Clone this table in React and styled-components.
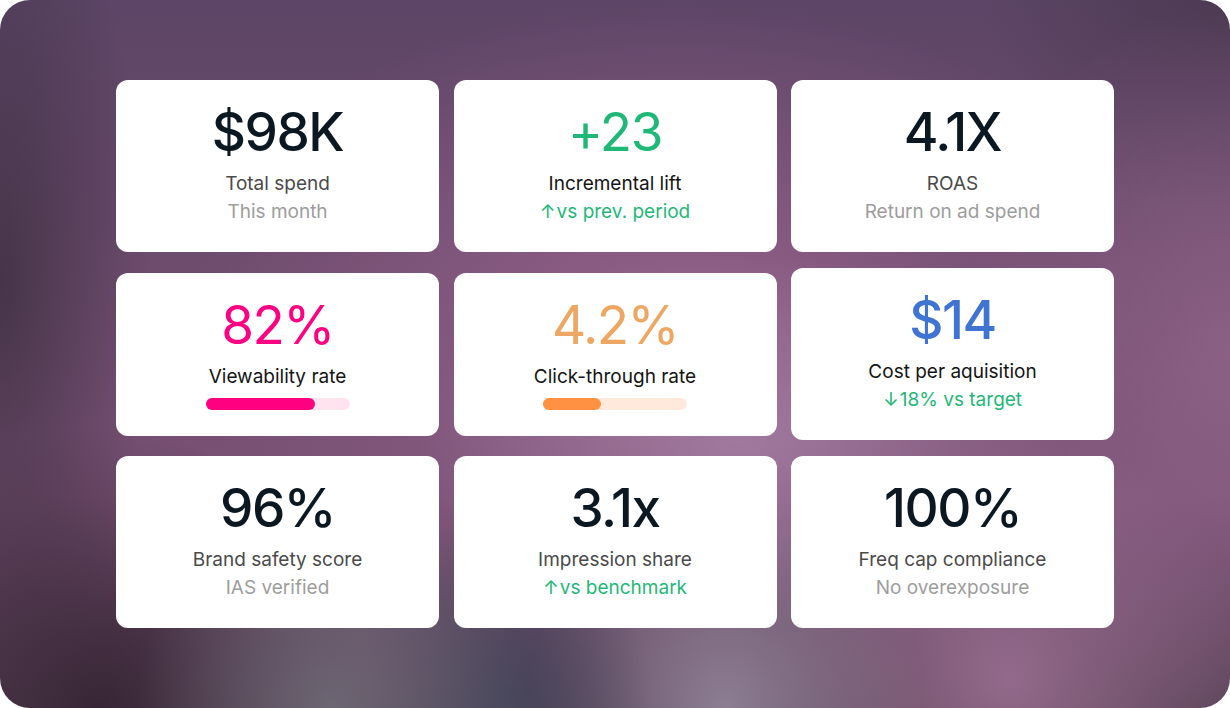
import React from 'react';
import styled, { createGlobalStyle } from 'styled-components';

const GlobalStyle = createGlobalStyle`
  html, body {
    margin:0;
    padding:0;
    background:#ffffff;
  }
  body {
    font-family:Inter, "Noto Sans", "Liberation Sans", sans-serif;
    -webkit-font-smoothing:antialiased;
  }
`

const Frame = styled.div`
  width:1230px;
  height:708px;
  box-sizing:border-box;
  border-radius:30px;
  overflow:hidden;
  padding-top:80px;
  display:flex;
  justify-content:center;
  align-items:flex-start;
  background:
    radial-gradient(ellipse 16% 30% at 27% 100%, rgba(112,108,120,0.85), rgba(112,108,120,0) 100%),
    radial-gradient(ellipse 12% 28% at 41% 100%, rgba(66,68,90,0.9), rgba(66,68,90,0) 100%),
    radial-gradient(ellipse 16% 32% at 59% 100%, rgba(150,136,158,0.85), rgba(150,136,158,0) 100%),
    radial-gradient(ellipse 20% 36% at 82% 96%, rgba(160,114,150,0.8), rgba(160,114,150,0) 100%),
    radial-gradient(ellipse 22% 40% at 8% 100%, rgba(54,36,52,0.95), rgba(54,36,52,0) 100%),
    radial-gradient(ellipse 26% 26% at 60% 62%, rgba(172,134,170,0.7), rgba(172,134,170,0) 100%),
    radial-gradient(ellipse 40% 45% at 55% 45%, rgba(150,98,140,0.9), rgba(150,98,140,0) 100%),
    radial-gradient(ellipse 22% 50% at 100% 50%, rgba(156,108,146,0.6), rgba(156,108,146,0) 100%),
    radial-gradient(ellipse 12% 60% at 0% 40%, rgba(56,44,60,0.75), rgba(56,44,60,0) 100%),
    radial-gradient(ellipse 20% 30% at 100% 0%, rgba(72,54,76,0.8), rgba(72,54,76,0) 100%),
    linear-gradient(180deg, #5c4566 0%, #6e4c6e 40%, #7a5276 70%, #5a4458 100%);
`

const Grid = styled.div`
  display:grid;
  grid-template-columns:repeat(3, 323px);
  column-gap:14.5px;
  row-gap:16px;
  align-items:center;
`

const Card = styled.div`
  background:#ffffff;
  border-radius:12px;
  padding:22px 16px 26px;
  display:flex;
  flex-direction:column;
  align-items:center;
  text-align:center;
`

const Value = styled.div`
  font-size:53px;
  line-height:60px;
  font-weight:${p => p.$weight || 500};
  color:${p => p.$color || '#0c1821'};
  letter-spacing:-1.5px;
`

const Label = styled.div`
  margin-top:8px;
  font-size:19px;
  line-height:28px;
  color:${p => p.$dark ? '#141414' : '#4a4a4a'};
`

const Sub = styled.div`
  font-size:19px;
  line-height:28px;
  color:${p => p.$green ? '#1fb877' : '#9d9d9d'};
`

const Arrow = styled.span`
  margin-right:1px;
`

const Track = styled.div`
  margin-top:7px;
  width:144px;
  height:12px;
  border-radius:6px;
  background:${p => p.$track};
  display:flex;
`

const Fill = styled.div`
  height:100%;
  border-radius:6px;
  background:${p => p.$fill};
`

const cards = [
  { value:'$98K', label:'Total spend', sub:'This month' },
  { value:'+23', color:'#1fb877', weight:400, label:'Incremental lift', dark:true, sub:'vs prev. period', arrow:'↑', green:true },
  { value:'4.1X', label:'ROAS', sub:'Return on ad spend' },
  { value:'82%', color:'#ff0080', weight:400, label:'Viewability rate', dark:true, bar:{ pct:76, fill:'#ff0080', track:'#ffe4f0' } },
  { value:'4.2%', color:'#eda763', weight:400, label:'Click-through rate', dark:true, bar:{ pct:40, fill:'#ff9142', track:'#ffe9dc' } },
  { value:'$14', color:'#3f74d3', label:'Cost per aquisition', dark:true, sub:'18% vs target', arrow:'↓', green:true },
  { value:'96%', label:'Brand safety score', sub:'IAS verified' },
  { value:'3.1x', label:'Impression share', sub:'vs benchmark', arrow:'↑', green:true },
  { value:'100%', label:'Freq cap compliance', sub:'No overexposure' },
]

const MetricCard = ({value,color,weight,label,dark,sub,arrow,green,bar})=>{
  return(
    <Card>
      <Value $color={color} $weight={weight}>{value}</Value>
      <Label $dark={dark}>{label}</Label>
      {sub && (
        <Sub $green={green}>{arrow && <Arrow>{arrow}</Arrow>}{sub}</Sub>
      )}
      {bar && (
        <Track $track={bar.track}>
          <Fill $fill={bar.fill} style={{width:`${bar.pct}%`}}/>
        </Track>
      )}
    </Card>
  )
}

const App = ()=>{
  return(
    <Frame>
      <GlobalStyle/>
      <Grid>
        {cards.map(c => <MetricCard key={c.label} {...c}/>)}
      </Grid>
    </Frame>
  )
}

export default App
